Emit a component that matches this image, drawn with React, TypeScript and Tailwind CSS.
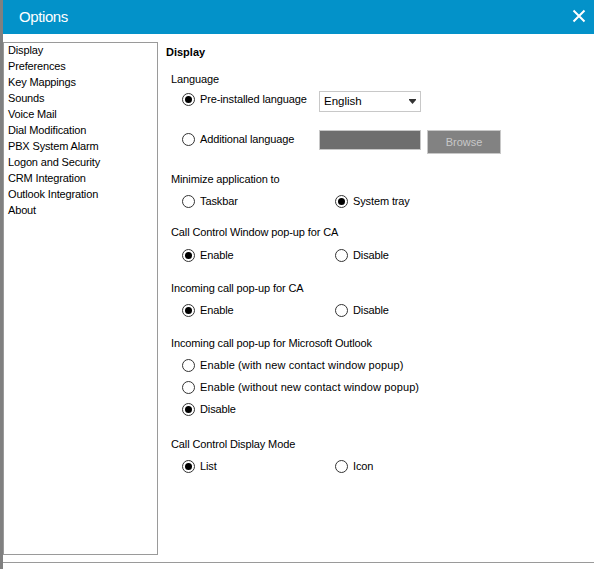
const menu = [
  "Display",
  "Preferences",
  "Key Mappings",
  "Sounds",
  "Voice Mail",
  "Dial Modification",
  "PBX System Alarm",
  "Logon and Security",
  "CRM Integration",
  "Outlook Integration",
  "About",
];

function Radio({ label, checked = false, wide = false }: { label: string; checked?: boolean; wide?: boolean }) {
  return (
    <div className="flex h-4 items-center">
      <span className="flex h-[13px] w-[13px] shrink-0 items-center justify-center rounded-full border border-[#333333] bg-white">
        {checked && <span className="h-[7px] w-[7px] rounded-full bg-black" />}
      </span>
      <span className={`ml-[5px] whitespace-nowrap ${wide ? "tracking-[0.11px]" : "tracking-[-0.12px]"}`}>{label}</span>
    </div>
  );
}

function PairRow({ a, b, first = true, className = "" }: { a: string; b: string; first?: boolean; className?: string }) {
  return (
    <div className={`ml-[16px] grid grid-cols-[153px_1fr] ${className}`}>
      <Radio label={a} checked={first} />
      <Radio label={b} checked={!first} />
    </div>
  );
}

function Label({ children, className = "" }: { children: string; className?: string }) {
  return <div className={`ml-[5px] h-4 leading-4 tracking-[-0.12px] ${className}`}>{children}</div>;
}

export default function App() {
  return (
    <div className="relative h-[569px] w-[594px] overflow-hidden bg-white font-['Liberation_Sans',sans-serif] text-[11px] text-black">
      <header className="flex h-[34px] items-center justify-between bg-[#0392c9] pl-[19px] pr-2 text-white">
        <span className="text-[15px] tracking-[-0.4px]">Options</span>
        <svg width="14" height="14" viewBox="0 0 14 14" className="mb-[3px]">
          <path d="M1.5 1.5 12.5 12.5M12.5 1.5 1.5 12.5" stroke="white" strokeWidth="2" fill="none" />
        </svg>
      </header>
      <div className="flex pl-[3px] pt-2">
        <nav className="h-[513px] w-[155px] shrink-0 border border-[#9a9a9a] pl-1 tracking-[-0.15px]">
          {menu.map((m) => (
            <div key={m} className="h-4 leading-[14px]">
              {m}
            </div>
          ))}
        </nav>
        <main className="ml-2 flex-1 pt-[2px]">
          <div className="h-4 font-bold leading-4">Display</div>
          <Label className="mt-[11px]">Language</Label>
          <div className="ml-[16px] mt-1 flex h-[21px] items-start">
            <div className="w-[137px]">
              <Radio label="Pre-installed language" checked />
            </div>
            <div className="flex h-[21px] w-[102px] items-center justify-between border border-[#c8c8c8] pl-1 pr-[4px] text-[11.5px]">
              English
              <svg width="7" height="5" viewBox="0 0 7 5">
                <path d="M0 0h7v1L3.5 5 0 1z" fill="#333" />
              </svg>
            </div>
          </div>
          <div className="ml-[16px] mt-[18px] flex items-start">
            <div className="w-[137px] pt-px">
              <Radio label="Additional language" />
            </div>
            <div className="h-5 w-[102px] border border-[#c8c8c8] bg-[#6e6e6e]" />
            <div className="ml-[6px] flex h-6 w-[74px] items-center justify-center border border-[#c8c8c8] bg-[#828282] text-[#c8c8c8]">
              Browse
            </div>
          </div>
          <Label className="mt-[17px]">Minimize application to</Label>
          <PairRow className="mt-[6px]" a="Taskbar" b="System tray" first={false} />
          <Label className="mt-[15px]">Call Control Window pop-up for CA</Label>
          <PairRow className="mt-[7px]" a="Enable" b="Disable" />
          <Label className="mt-[17px]">Incoming call pop-up for CA</Label>
          <PairRow className="mt-[6px]" a="Enable" b="Disable" />
          <Label className="mt-[17px]">Incoming call pop-up for Microsoft Outlook</Label>
          <div className="ml-[16px] mt-[6px] flex flex-col gap-[6px]">
            <Radio label="Enable (with new contact window popup)" wide />
            <Radio label="Enable (without new contact window popup)" wide />
            <Radio label="Disable" checked />
          </div>
          <Label className="mt-[19px]">Call Control Display Mode</Label>
          <PairRow className="mt-[6px]" a="List" b="Icon" />
        </main>
      </div>
      <div className="absolute bottom-0 left-0 top-0 w-[3px] bg-[#808080]" />
      <div className="absolute bottom-[6px] left-[3px] right-0 h-px bg-[#9a9a9a]" />
    </div>
  );
}
